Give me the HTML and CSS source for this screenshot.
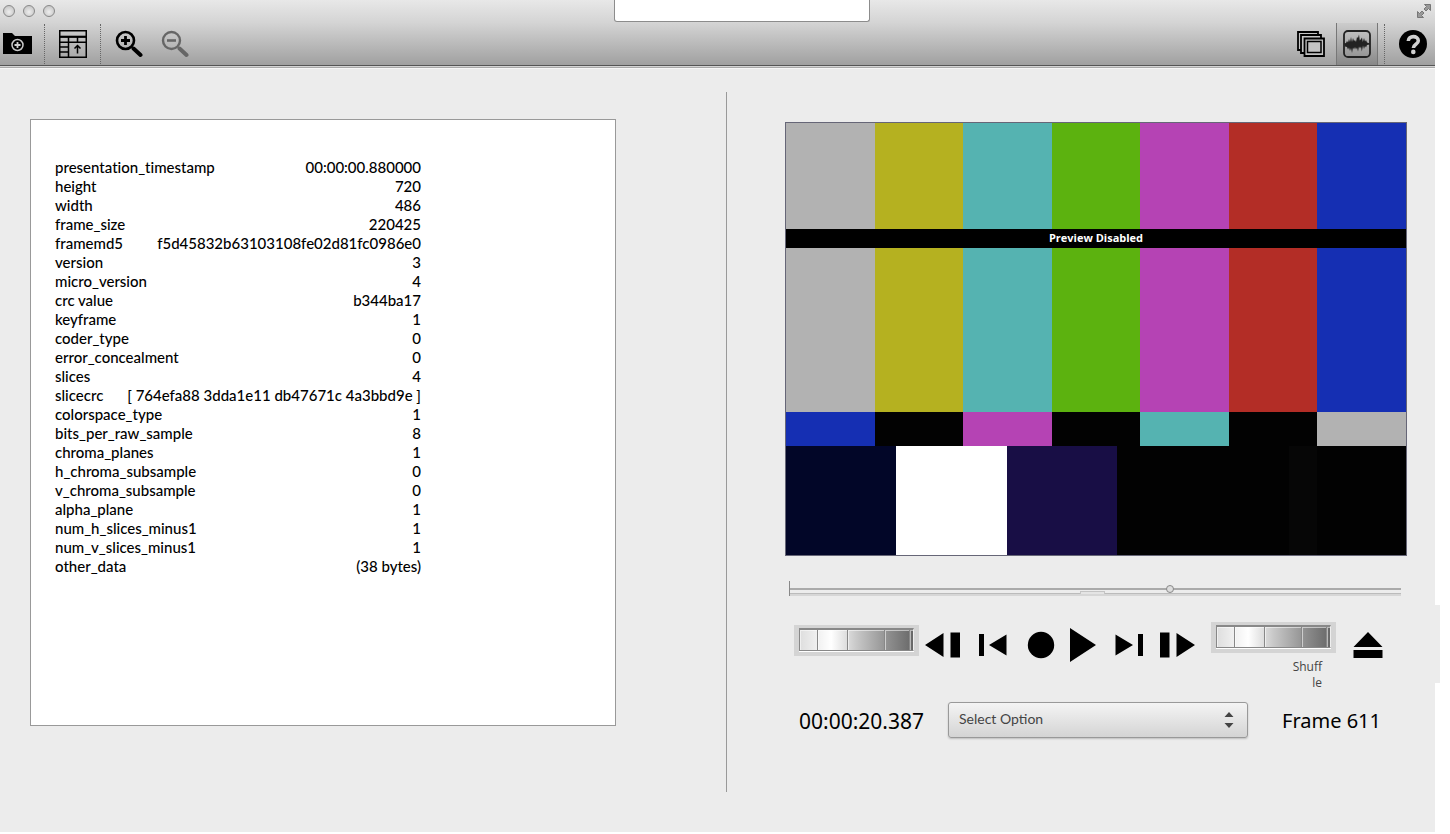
FILE: index.html
```html
<!DOCTYPE html>
<html lang="en">
<head>
<meta charset="utf-8">
<title>Frame inspector</title>
<link rel="stylesheet" href="styles.css">
</head>
<body>
<div class="window">
  <header class="toolbar">
    <div class="titlebar">
      <div class="lights">
        <button class="light" aria-label="Close"></button>
        <button class="light" aria-label="Minimize"></button>
        <button class="light" aria-label="Zoom window"></button>
      </div>
      <input class="title-field" type="text" aria-label="Title">
      <button class="icon-btn fullscreen" aria-label="Full screen">
        <svg width="16" height="16" viewBox="0 0 16 16" fill="#999" stroke="#777"><path d="M8.500 1.500h6v6l-2-2-2.500 2.500-2-2 2.500-2.500zM7.500 14.500h-6v-6l2 2 2.500-2.500 2 2-2.500 2.500z"/></svg>
      </button>
    </div>
    <div class="tools">
      <div class="tool-group">
        <button class="icon-btn folder" aria-label="Add folder">
          <svg width="29" height="23" viewBox="0 0 29 23"><path d="M0 1h9l3 3h17v18H0z" fill="#000"/><circle cx="14.500" cy="13" r="5.500" fill="none" stroke="#c8c8c8" stroke-width="1.500"/><path d="M11.500 13h6M14.500 10v6" stroke="#d0d0d0" stroke-width="1.800"/></svg>
        </button>
        <span class="sep"></span>
        <button class="icon-btn table-tool" aria-label="Export table">
          <svg width="28" height="28" viewBox="0 0 28 28" fill="none" stroke="#000" stroke-width="1.500"><path d="M.75.75h26.500v26.500H.75z"/><path d="M0 6.800h28" stroke-width="2.200"/><path d="M0 12.200h28M9.500 7v21M18.500 7v5M1 17h8M1 22h8"/><path d="M18.500 23.500v-8M15.500 18.500l3-3 3 3"/></svg>
        </button>
        <span class="sep"></span>
        <button class="icon-btn zoom" aria-label="Zoom in">
          <svg width="28" height="28" viewBox="0 0 28 28" fill="none" stroke="#000"><circle cx="10.500" cy="10.500" r="8.500" stroke-width="2.600"/><path d="M6 10.500h9M10.500 6v9" stroke-width="2.800"/><path d="M18.500 18.500l7 6.500" stroke-width="4" stroke-linecap="round"/></svg>
        </button>
        <button class="icon-btn zoom" aria-label="Zoom out">
          <svg width="28" height="28" viewBox="0 0 28 28" fill="none" stroke="#666"><circle cx="10.500" cy="10.500" r="8.500" stroke-width="2.400"/><path d="M6 10.500h9" stroke-width="2.600"/><path d="M18.500 18.500l7 6.500" stroke-width="4" stroke-linecap="round"/></svg>
        </button>
      </div>
      <div class="tool-group">
        <button class="icon-btn frames" aria-label="Frames">
          <svg width="28" height="26" viewBox="0 0 28 26" fill="#c4c4c4" stroke="#000" stroke-width="1.800"><path d="M1 1h20v18H1z"/><path d="M4 4h20v18H4z"/><path d="M7.500 7.500h19.500v17.500H7.500z"/><path d="M10.500 10.500h13.500v11H10.500z" stroke-width="1.500"/></svg>
        </button>
        <button class="icon-btn wave" aria-label="Waveform" aria-pressed="true">
          <svg width="28" height="28" viewBox="0 0 28 28"><rect x="1" y="1" width="26" height="26" rx="4" fill="none" stroke="#222" stroke-width="1.800"/><path d="M1 13.500l2-.5 1-2 1 1.500L6 9l1 3 1-5 1 5 1-4 1 3 1-1 1 2 1-5 1 1 1-3.500.8 6L18 9l1-1.500.8 4.500 1.200-4 1 3.500 1-1.500 1 2.500 3 1v1l-3 .5-1 2.500-1-1.500-1 3-1-3.500-1.200 6-.8-5-1 2-1-2-1 5-1-4-1 2-1-2.500-1 2.500-1-2-1 5.500-1-5-1 3-1-3.500-1 2-1-2.500-2-.5z" fill="#222"/></svg>
        </button>
        <span class="sep"></span>
        <button class="icon-btn help" aria-label="Help">
          <svg width="28" height="28" viewBox="0 0 28 28"><circle cx="14" cy="14" r="14" fill="#000"/><path d="M9.300 11c0-5.800 10-5.800 10-.2 0 3.700-4.900 3.200-4.900 7.200" fill="none" stroke="#d0d0d0" stroke-width="3.600"/><circle cx="14.300" cy="21.900" r="2.300" fill="#d0d0d0"/></svg>
        </button>
      </div>
    </div>
  </header>

  <main class="content">
    <section class="pane data-pane">
      <div class="sheet">
        <table class="meta">
          <tbody>
            <tr><th scope="row">presentation_timestamp</th><td>00:00:00.880000</td></tr>
            <tr><th scope="row">height</th><td>720</td></tr>
            <tr><th scope="row">width</th><td>486</td></tr>
            <tr><th scope="row">frame_size</th><td>220425</td></tr>
            <tr><th scope="row">framemd5</th><td>f5d45832b63103108fe02d81fc0986e0</td></tr>
            <tr><th scope="row">version</th><td>3</td></tr>
            <tr><th scope="row">micro_version</th><td>4</td></tr>
            <tr><th scope="row">crc value</th><td>b344ba17</td></tr>
            <tr><th scope="row">keyframe</th><td>1</td></tr>
            <tr><th scope="row">coder_type</th><td>0</td></tr>
            <tr><th scope="row">error_concealment</th><td>0</td></tr>
            <tr><th scope="row">slices</th><td>4</td></tr>
            <tr><th scope="row">slicecrc</th><td>[ 764efa88 3dda1e11 db47671c 4a3bbd9e ]</td></tr>
            <tr><th scope="row">colorspace_type</th><td>1</td></tr>
            <tr><th scope="row">bits_per_raw_sample</th><td>8</td></tr>
            <tr><th scope="row">chroma_planes</th><td>1</td></tr>
            <tr><th scope="row">h_chroma_subsample</th><td>0</td></tr>
            <tr><th scope="row">v_chroma_subsample</th><td>0</td></tr>
            <tr><th scope="row">alpha_plane</th><td>1</td></tr>
            <tr><th scope="row">num_h_slices_minus1</th><td>1</td></tr>
            <tr><th scope="row">num_v_slices_minus1</th><td>1</td></tr>
            <tr><th scope="row">other_data</th><td>(38 bytes)</td></tr>
          </tbody>
        </table>
      </div>
    </section>
    <div class="divider"></div>
    <section class="pane player">
      <div class="video">
        <div class="bars bars-main"><i class="grey"></i><i class="yellow"></i><i class="cyan"></i><i class="green"></i><i class="magenta"></i><i class="red"></i><i class="blue"></i></div>
        <div class="bars bars-mid"><i class="blue"></i><i class="black"></i><i class="magenta"></i><i class="black"></i><i class="cyan"></i><i class="black"></i><i class="grey"></i></div>
        <div class="bars bars-low"><i class="navy"></i><i class="white"></i><i class="purple"></i><i class="black"></i><i class="pluge"></i><i class="black"></i></div>
        <div class="banner">Preview Disabled</div>
      </div>

      <div class="scrub">
        <input class="scrub-range" type="range" min="0" max="1000" value="624" aria-label="Position">
        <span class="scrub-tab"></span>
      </div>

      <div class="transport">
        <div class="wheel-cell"><div class="wheel"><i></i><i></i><i></i><i></i><i></i></div></div>
        <button class="icon-btn key" aria-label="Step back"><svg width="36" height="26" viewBox="0 0 36 26"><path d="M0 13L18.500 1v24zM25.500.500H35v25h-9.500z"/></svg></button>
        <button class="icon-btn key" aria-label="Previous"><svg width="28" height="24" viewBox="0 0 28 24"><path d="M0 1h5v22H0zM10 12L27.500 1.500v21z"/></svg></button>
        <button class="icon-btn key" aria-label="Record"><svg width="28" height="28" viewBox="0 0 28 28"><circle cx="14" cy="14" r="13.200"/></svg></button>
        <button class="icon-btn key" aria-label="Play"><svg width="28" height="36" viewBox="0 0 28 36"><path d="M1 1l26 17L1 35z"/></svg></button>
        <button class="icon-btn key" aria-label="Next"><svg width="28" height="24" viewBox="0 0 28 24"><path d="M23 1h5v22h-5zM18 12L.500 1.500v21z"/></svg></button>
        <button class="icon-btn key" aria-label="Step forward"><svg width="36" height="26" viewBox="0 0 36 26"><path d="M1 .500h9.500v25H1zM17.500 1L36 13 17.500 25z"/></svg></button>
        <div class="shuffle-cell">
          <div class="wheel"><i></i><i></i><i></i><i></i><i></i></div>
          <div class="shuffle-label">Shuff<br>le</div>
        </div>
        <button class="icon-btn key" aria-label="Eject"><svg width="30" height="28" viewBox="0 0 30 28"><path d="M15 1l14.500 15H.500zM.500 19h29v8H.500z"/></svg></button>
      </div>

      <div class="status">
        <span class="readout">00:00:20.387</span>
        <div class="picker">
          <select class="picker-select" aria-label="Option"><option>Select Option</option></select>
          <svg class="picker-arrows" width="10" height="16" viewBox="0 0 10 16" fill="#444"><path d="M5 0l4.500 5h-9zM5 16l4.500-5h-9z"/></svg>
        </div>
        <span class="readout frame">Frame 611</span>
      </div>
    </section>
  </main>
</div>
</body>
</html>
```
FILE: styles.css
```css
* {
  box-sizing: border-box;
}

body {
  margin: 0;
  min-height: 100vh;
  padding: 0 15px 2px 0;
  display: flex;
  background: #fff;
  color: #000;
  font-family: Lato, "Open Sans", sans-serif;
  font-size: 15px;
  font-variant-ligatures: none;
}

.window {
  position: relative;
  flex: 1;
  min-width: 0;
  display: flex;
  flex-direction: column;
  background: #ececec;
}

/* small handle protruding from the right edge */
.window::after {
  content: "";
  position: absolute;
  left: 100%;
  top: 605px;
  width: 5px;
  height: 78px;
  background: #ececec;
}

.icon-btn {
  display: flex;
  align-items: center;
  justify-content: center;
  padding: 0;
  border: 0;
  background: none;
}

/* toolbar */
.toolbar {
  background: linear-gradient(#e8e8e8, #d4d4d4 35%, #a0a0a0);
  border-bottom: 1px solid #555;
  box-shadow: 0 1px #d4d4d4, 0 2px #aaa, 0 3px #f8f8f8;
}

.titlebar {
  display: grid;
  grid-template-columns: 614fr 256px 565fr;
  height: 22px;
}

.lights {
  display: flex;
  align-items: center;
  gap: 8px;
  padding-left: 3px;
}

.light {
  width: 12px;
  height: 12px;
  padding: 0;
  border: 1px solid #888;
  border-radius: 50%;
  background: radial-gradient(circle at 50% 60%, #eee, #bbb);
}

.title-field {
  border: 1px solid #8c8c8c;
  border-top: 0;
  border-radius: 0 0 3px 3px;
  background: #fff;
}

.fullscreen {
  justify-self: end;
  padding-right: 3px;
}

.tools {
  display: flex;
  justify-content: space-between;
  height: 43px;
  padding: 0 8px 0 3px;
}

.tool-group {
  display: flex;
  align-items: center;
}

.sep {
  height: 40px;
  border-left: 1px dotted #666;
}

.folder {
  margin-right: 12px;
}

.table-tool {
  margin: 0 13px 0 14px;
}

.zoom {
  width: 46px;
  padding-left: 10px;
}

.frames {
  margin-right: 11px;
}

.wave {
  width: 42px;
  height: 42px;
  border: solid #777;
  border-width: 0 1px;
  background: linear-gradient(#ccc, #888);
}

.wave + .sep {
  margin-left: 6px;
}

.help {
  margin-left: 14px;
}

/* content */
.content {
  flex: 1;
  display: grid;
  grid-template-columns: 726fr 1px 708fr;
  padding-top: 1px;
}

.data-pane {
  padding: 52px 110px 0 30px;
}

.sheet {
  min-height: 607px;
  padding: 38px 24px;
  border: 1px solid #999;
  background: #fff;
}

.meta,
.meta tbody {
  display: block;
}

.meta {
  max-width: 366px;
  line-height: 19px;
  font-weight: 500;
}

.meta tr {
  display: flex;
  justify-content: space-between;
}

.meta th,
.meta td {
  padding: 0;
  font-weight: inherit;
  white-space: nowrap;
}

.divider {
  margin: 25px 0 40px;
  background: #999;
}

.player {
  padding: 55px 28px 0 58px;
}

/* preview picture */
.video {
  position: relative;
  display: grid;
  grid-template-rows: 290fr 34fr 109fr;
  aspect-ratio: 622 / 434;
  border: 1px solid #667;
  background: #000;
}

.bars {
  display: grid;
  grid-template-columns: repeat(7, 1fr);
}

.bars-low {
  grid-template-columns: 110fr 111fr 110fr 172fr 28fr 89fr;
}

.grey { background: #b2b2b2; }
.yellow { background: #b5b120; }
.cyan { background: #55b3b1; }
.green { background: #5cb20f; }
.magenta { background: #b543b4; }
.red { background: #b32d26; }
.blue { background: #152fb3; }
.navy { background: #020628; }
.white { background: #fff; }
.purple { background: #180e45; }
.black { background: #020202; }
.pluge { background: #060606; }

.banner {
  position: absolute;
  left: 0;
  right: 0;
  top: 106px;
  height: 19px;
  background: #000;
  color: #fff;
  font: 700 11px/18px "Open Sans", sans-serif;
  text-align: center;
}

/* scrubber */
.scrub {
  position: relative;
  height: 15px;
  margin: 25px 6px 0 4px;
  border-left: 1px solid #888;
  background: linear-gradient(#aaa, #aaa) 0 7px / 100% 2px no-repeat,
    linear-gradient(#bbb, #bbb) 0 12px / 100% 1px no-repeat,
    linear-gradient(#d6d6d6, #d6d6d6) 0 13px / 100% 2px no-repeat;
}

.scrub-range {
  display: block;
  appearance: none;
  width: 100%;
  height: 16px;
  margin: 0;
  background: none;
}

.scrub-range::-webkit-slider-thumb {
  appearance: none;
  width: 8px;
  height: 8px;
  border: 1px solid #888;
  border-radius: 50%;
  background: #ddd;
}

.scrub-tab {
  position: absolute;
  left: 290px;
  top: 10px;
  width: 25px;
  height: 3px;
  border: 1px solid #c4c4c4;
  border-bottom: 0;
  background: #e4e4e4;
}

/* transport */
.transport {
  display: grid;
  grid-template-columns: 125fr 47fr 54fr 42fr 41fr 51fr 46fr 136fr 63fr;
  margin: 26px 8px 0 9px;
  align-items: start;
}

.key {
  height: 46px;
}

.wheel-cell {
  padding-top: 3px;
}

.shuffle-cell {
  display: flex;
  flex-direction: column;
  align-items: flex-end;
}

.wheel {
  display: grid;
  grid-template-columns: 18fr 30fr 36fr 25fr 5fr;
  width: 125px;
  height: 31px;
  padding: 3px 5px 5px;
  background: linear-gradient(90deg, #ddd, #fff 28%, #c8c8c8 50%, #8a8a8a 80%, #666) content-box, #d4d4d4;
}

.wheel i {
  border: solid #888;
  border-width: 2px 0 1px 1px;
  box-shadow: inset 1px 1px #fff8, 0 1px #fff;
}

.wheel i:last-child {
  border-right: 1px solid #eee;
}

.shuffle-label {
  padding: 6px 14px 0 0;
  color: #444;
  font: 12px/16px "Open Sans", sans-serif;
  text-align: right;
}

/* status row */
.status {
  display: grid;
  grid-template-columns: 149fr 300fr 133fr;
  align-items: center;
  margin: 10px 26px 0 14px;
}

.readout {
  padding-top: 2px;
  font: 21px/36px "Noto Sans", sans-serif;
  white-space: nowrap;
}

.frame {
  font-size: 20px;
  text-align: right;
}

.picker {
  position: relative;
}

.picker-select {
  display: block;
  appearance: none;
  width: 100%;
  height: 36px;
  padding: 0 30px 3px 10px;
  border: 1px solid #999;
  border-radius: 3px;
  background: linear-gradient(#f4f4f4, #d4d4d4);
  box-shadow: 0 1px 2px #0003;
  color: #444;
  font: 14px Lato, sans-serif;
}

.picker-arrows {
  position: absolute;
  right: 14px;
  top: 10px;
  pointer-events: none;
}
```
